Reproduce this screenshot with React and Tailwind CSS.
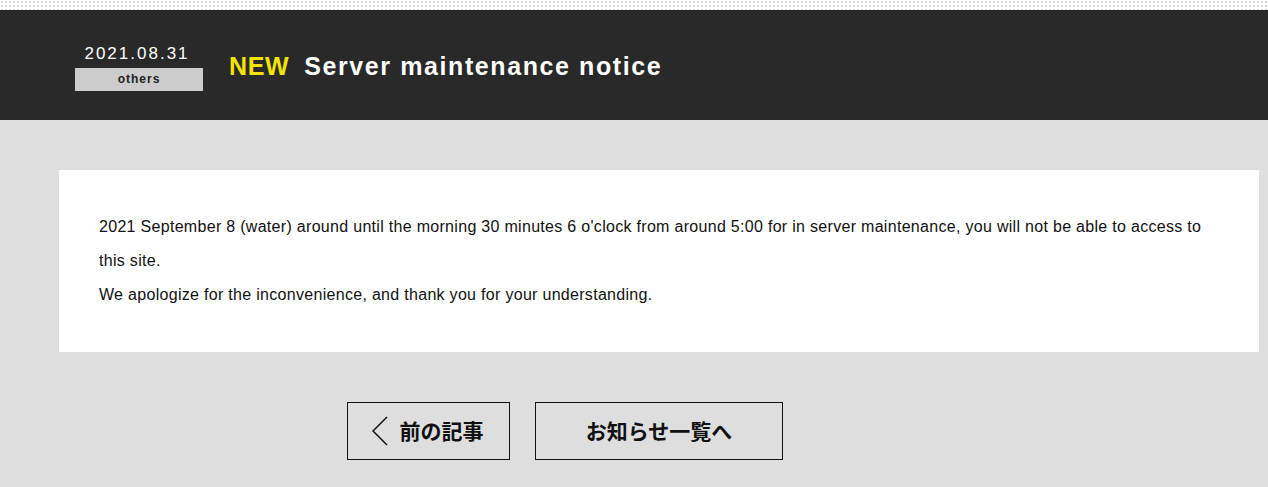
import React from 'react';

const NewsDetail = () => {
  return (
    <div className="w-full min-h-[487px] bg-[#dedede] font-['Liberation_Sans','Noto_Sans_CJK_JP',sans-serif] text-black">
      {/* Dotted strip */}
      <div className="h-[10px] bg-white bg-[radial-gradient(#d6d6d6_1px,transparent_1.2px)] bg-[length:4px_4px]" />

      {/* Title bar */}
      <header className="h-[110px] bg-[#292929] flex items-center pl-[75px]">
        <div className="flex flex-col items-center w-[128px] mt-[3px]">
          <span className="text-white text-[17px] leading-[22px] tracking-[2px] pr-[4px]">2021.08.31</span>
          <span className="mt-[3px] w-full h-[23px] bg-[#cccccc] text-[#222] text-[12px] leading-[23px] tracking-[1px] font-bold text-center">
            others
          </span>
        </div>
        <h1 className="ml-[26px] mt-[3px] flex items-center gap-[15px] text-[25px] font-bold tracking-[1.6px]">
          <span className="text-[#f5e400] tracking-[0.6px]">NEW</span>
          <span className="text-white">Server maintenance notice</span>
        </h1>
      </header>

      {/* Article */}
      <main className="pl-[59px] pr-[9px] pt-[50px] pb-[27px]">
        <div className="bg-white px-[40px] pt-[40px] pb-[40px] text-[16px] leading-[34px] tracking-[0.3px] text-[#111]">
          <p>
            2021 September 8 (water) around until the morning 30 minutes 6 o'clock from around 5:00 for in server maintenance, you will not be able to access to this site.
          </p>
          <p>We apologize for the inconvenience, and thank you for your understanding.</p>
        </div>

        {/* Pager */}
        <nav className="mt-[50px] flex justify-center gap-[25px] font-['Noto_Sans_CJK_JP',sans-serif] font-bold text-[21px] text-[#111]">
          <a className="w-[163px] h-[58px] border border-[#111] flex items-center justify-center gap-[12px] pr-[2px]">
            <svg width="16" height="30" viewBox="0 0 16 30" fill="none" stroke="#111" strokeWidth="1.5">
              <polyline points="15,1 1,15 15,29" />
            </svg>
            <span>前の記事</span>
          </a>
          <a className="w-[248px] h-[58px] border border-[#111] flex items-center justify-center">
            お知らせ一覧へ
          </a>
          <div className="w-[163px] h-[58px] invisible" />
        </nav>
      </main>
    </div>
  );
};

export default NewsDetail;
